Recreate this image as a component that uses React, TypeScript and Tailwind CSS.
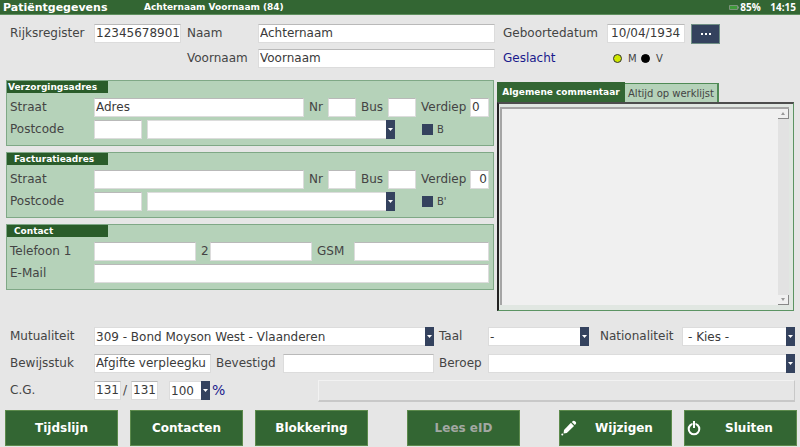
import { useState } from 'react';
import type { InputHTMLAttributes, ReactNode, SelectHTMLAttributes } from 'react';

type TabType = 'comment' | 'worklist';

function Field({ className = '', ...props }: InputHTMLAttributes<HTMLInputElement>) {
  return (
    <input
      type="text"
      className={`h-[19px] min-w-0 border border-[#dcdcdc] border-t-[#b9b9b9] bg-white px-px text-[12px] text-[#3a3a3a] outline-none ${className}`}
      {...props}
    />
  );
}

interface DropdownProps extends SelectHTMLAttributes<HTMLSelectElement> {
  options: string[];
  wrapper: string;
}

function Dropdown({ options, wrapper, className = 'px-px', ...props }: DropdownProps) {
  return (
    <div className={`relative h-[19px] min-w-0 ${wrapper}`}>
      <select
        className={`block h-full w-full appearance-none border border-[#dcdcdc] bg-white text-[12px] text-[#3a3a3a] outline-none ${className}`}
        {...props}
      >
        {options.map((option) => (
          <option key={option}>{option}</option>
        ))}
      </select>
      <span className="pointer-events-none absolute inset-y-0 right-0 flex w-[9px] items-center justify-center bg-[#34425e]">
        <svg width="5" height="3" viewBox="0 0 5 3">
          <path d="M0 0h5L2.5 3z" fill="#fff" />
        </svg>
      </span>
    </div>
  );
}

function Label({ id, className = '', children }: { id: string; className?: string; children: ReactNode }) {
  return (
    <label htmlFor={id} className={`shrink-0 whitespace-nowrap ${className}`}>
      {children}
    </label>
  );
}

function Panel({ title, indent, children }: { title: string; indent: string; children: ReactNode }) {
  return (
    <section className="border border-[#7fa886] bg-[#b5d2b9] pb-[6px]">
      <h2 className={`h-3 w-[101px] bg-[#2a5c2a] text-[9px] leading-3 font-bold whitespace-nowrap text-white ${indent}`}>
        {title}
      </h2>
      <div className="mt-[5px] flex flex-col gap-[3px] pr-1 pl-[3px]">{children}</div>
    </section>
  );
}

function Address({ prefix, street, floor, floorClass, box }: {
  prefix: string;
  street: string;
  floor: string;
  floorClass: string;
  box: string;
}) {
  return (
    <>
      <div className="flex items-center">
        <Label id={`${prefix}-street`} className="w-[84px]">Straat</Label>
        <Field id={`${prefix}-street`} defaultValue={street} className="flex-1" />
        <Label id={`${prefix}-nr`} className="w-6 pl-[5px]">Nr</Label>
        <Field id={`${prefix}-nr`} className="w-7" />
        <Label id={`${prefix}-bus`} className="w-8 pl-[5px]">Bus</Label>
        <Field id={`${prefix}-bus`} className="w-7" />
        <Label id={`${prefix}-floor`} className="w-[54px] pl-[5px]">Verdiep</Label>
        <Field id={`${prefix}-floor`} defaultValue={floor} className={`w-[19px] ${floorClass}`} />
      </div>
      <div className="flex items-center">
        <Label id={`${prefix}-zip`} className="w-[84px]">Postcode</Label>
        <Field id={`${prefix}-zip`} className="mr-[5px] w-12" />
        <Dropdown wrapper="flex-1" options={['']} aria-label="Gemeente" />
        <label className="flex w-[94px] items-center gap-1 pl-[27px] text-[10px]">
          <input type="checkbox" className="size-[11px] appearance-none bg-[#34425e]" />
          {box}
        </label>
      </div>
    </>
  );
}

function ActionButton({ icon, disabled, children }: {
  icon?: ReactNode;
  disabled?: boolean;
  children: ReactNode;
}) {
  return (
    <button
      type="button"
      disabled={disabled}
      className="flex h-9 w-[113px] shrink-0 items-center border border-[#5c8a4c] bg-[#336633] text-[12px] font-bold text-white disabled:text-[#a3a8a3]"
    >
      {icon}
      <span className="flex-1 text-center">{children}</span>
    </button>
  );
}

const PencilIcon = (
  <svg width="16" height="16" viewBox="0 0 16 16" fill="#fff" className="ml-px shrink-0">
    <path d="M9.9 2.8 13 5.9 5.8 12.9 2.6 13.6 3 10z" />
    <path d="M10.8 2.1 12 1q1-.8 2 .2l.8.8q.8 1 0 1.9L13.8 5z" />
    <circle cx="1.3" cy="14.4" r="1" />
  </svg>
);

const PowerIcon = (
  <svg width="16" height="16" viewBox="0 0 16 16" fill="none" stroke="#fff" strokeWidth="2" className="ml-px shrink-0">
    <circle cx="8" cy="9" r="5.3" />
    <path d="M8 1v7.5" stroke="#336633" strokeWidth="3" />
    <path d="M8 1v7" />
  </svg>
);

export default function App() {
  const [activeTab, setActiveTab] = useState<TabType>('comment');

  return (
    <div className="min-h-screen bg-[#e6e6e6] font-['DejaVu_Sans',sans-serif] text-[12px] leading-[19px] text-[#444]">
      <header className="flex h-[15px] items-center border-b border-[#5f8f5f] bg-[#336633] pr-1 pl-[3px] font-bold whitespace-nowrap text-white">
        <h1 className="w-[141px] text-[11px]">Patiëntgegevens</h1>
        <span className="flex-1 text-[9px]">Achternaam Voornaam (84)</span>
        <svg width="10" height="5" viewBox="0 0 10 5" className="mr-px">
          <path d="M.5.5h8v4h-8z" fill="#3f9a3a" stroke="#7d947d" />
          <path d="M9 1.5h1v2H9z" fill="#7d947d" />
        </svg>
        <span className="w-[30px] font-['Open_Sans',sans-serif] text-[10px]">85%</span>
        <span className="font-['Open_Sans',sans-serif] text-[10px]">14:15</span>
      </header>

      <form onSubmit={(e) => e.preventDefault()}>
        {/* Identity */}
        <div className="flex gap-2 pt-[9px] pl-[10px]">
          <div className="flex min-w-0 flex-1">
            <Label id="register" className="w-[84px]">Rijksregister</Label>
            <Field id="register" defaultValue="12345678901" className="w-[87px]" />
            <div className="flex min-w-0 flex-1 flex-col gap-[6px] pl-[6px]">
              <div className="flex">
                <Label id="lastname" className="w-[71px]">Naam</Label>
                <Field id="lastname" defaultValue="Achternaam" className="flex-1" />
              </div>
              <div className="flex">
                <Label id="firstname" className="w-[71px]">Voornaam</Label>
                <Field id="firstname" defaultValue="Voornaam" className="flex-1" />
              </div>
            </div>
          </div>
          <div className="flex w-[297px] shrink-0 flex-col gap-[5px]">
            <div className="flex h-5">
              <Label id="birthdate" className="w-[104px]">Geboortedatum</Label>
              <Field id="birthdate" defaultValue="10/04/1934" className="mr-[6px] w-[78px] pl-[3px]" />
              <button
                type="button"
                aria-label="Kies datum"
                className="flex h-5 w-[29px] items-center justify-center border border-[#6f8f85] bg-[#34425e]"
              >
                <svg width="10" height="2" viewBox="0 0 10 2" fill="#fff">
                  <path d="M0 0h2v2H0zM4 0h2v2H4zM8 0h2v2H8z" />
                </svg>
              </button>
            </div>
            <fieldset className="flex items-center text-[10px]">
              <legend className="float-left w-[110px] text-[12px] text-[#1a1a8c]">Geslacht</legend>
              <label className="flex w-[28px] items-center gap-[6px]">
                <input
                  type="radio"
                  name="gender"
                  defaultChecked
                  className="size-[9px] shrink-0 appearance-none rounded-full border border-[#333] bg-black checked:bg-[#cfe800]"
                />
                M
              </label>
              <label className="flex items-center gap-[6px]">
                <input
                  type="radio"
                  name="gender"
                  className="size-[9px] shrink-0 appearance-none rounded-full border border-black bg-black checked:bg-[#cfe800]"
                />
                V
              </label>
            </fieldset>
          </div>
        </div>

        <div className="mt-3 flex gap-[3px] pr-[6px] pl-[6px]">
          {/* Addresses and contact */}
          <div className="flex min-w-0 flex-1 flex-col gap-[6px]">
            <Panel title="Verzorgingsadres" indent="pl-px">
              <Address prefix="care" street="Adres" floor="0" floorClass="" box="B" />
            </Panel>
            <Panel title="Facturatieadres" indent="pl-[7px]">
              <Address prefix="bill" street="" floor="0" floorClass="text-right" box="B'" />
            </Panel>
            <Panel title="Contact" indent="pl-[7px]">
              <div className="flex items-center">
                <Label id="phone1" className="w-[84px]">Telefoon 1</Label>
                <Field id="phone1" className="w-[102px]" />
                <Label id="phone2" className="w-[14px] pl-[5px]">2</Label>
                <Field id="phone2" className="w-[102px]" />
                <Label id="gsm" className="w-[42px] pl-[5px]">GSM</Label>
                <Field id="gsm" className="flex-1" />
              </div>
              <div className="flex items-center">
                <Label id="email" className="w-[84px]">E-Mail</Label>
                <Field id="email" className="flex-1" />
              </div>
            </Panel>
          </div>

          {/* Comment tabs */}
          <div className="flex w-[297px] shrink-0 flex-col pt-[2px]">
            <div className="flex items-end" role="tablist">
              <button
                type="button"
                role="tab"
                aria-selected={activeTab === 'comment'}
                onClick={() => setActiveTab('comment')}
                className="h-5 w-32 border border-[#336633] bg-[#336633] text-[9px] font-bold whitespace-nowrap text-white"
              >
                Algemene commentaar
              </button>
              <button
                type="button"
                role="tab"
                aria-selected={activeTab === 'worklist'}
                onClick={() => setActiveTab('worklist')}
                className="h-[19px] w-[94px] border-t border-r-2 border-[#4f8a55] bg-[#b5d2b9] text-[10px] whitespace-nowrap text-[#444]"
              >
                Altijd op werklijst
              </button>
            </div>
            <div className="flex h-[209px] border-t-2 border-r border-b border-l-2 border-t-[#4d4d4d] border-r-[#5c9463] border-b-[#5c9463] border-l-[#222] bg-[#e1e7e2] pt-[3px] pr-1 pb-[5px] pl-px">
              <textarea
                aria-label="Commentaar"
                className="min-w-0 flex-1 resize-none border-t-2 border-l-2 border-[#a5a5a5] bg-[#f0f0f0] p-1 outline-none"
              />
              <div className="flex w-[11px] flex-col justify-between border-t-2 border-t-[#a5a5a5] bg-[#e2e2e2]">
                <button type="button" aria-label="Omhoog" className="flex h-[10px] items-center justify-center border-r border-b border-[#888] bg-[#f0f0f0]">
                  <svg width="4" height="3" viewBox="0 0 4 3"><path d="M0 3h4L2 0z" fill="#999" /></svg>
                </button>
                <button type="button" aria-label="Omlaag" className="flex h-[10px] items-center justify-center border-r border-b border-[#888] bg-[#f0f0f0]">
                  <svg width="4" height="3" viewBox="0 0 4 3"><path d="M0 0h4L2 3z" fill="#999" /></svg>
                </button>
              </div>
            </div>
          </div>
        </div>

        {/* Insurance */}
        <div className="mt-4 flex flex-col gap-2 pr-[5px] pl-[10px]">
          <div className="flex">
            <Label id="insurer" className="w-[84px]">Mutualiteit</Label>
            <Dropdown id="insurer" wrapper="flex-1" options={['309 - Bond Moyson West - Vlaanderen']} />
            <Label id="language" className="w-[54px] pl-[5px]">Taal</Label>
            <Dropdown id="language" wrapper="w-[101px]" options={['-']} />
            <Label id="nationality" className="w-[93px] pl-[11px]">Nationaliteit</Label>
            <Dropdown id="nationality" wrapper="w-[113px]" className="px-[5px]" options={['- Kies -']} />
          </div>
          <div className="flex">
            <Label id="proof" className="w-[84px]">Bewijsstuk</Label>
            <Field id="proof" defaultValue="Afgifte verpleegku" className="w-[117px]" />
            <Label id="confirmed" className="w-[72px] pl-[5px]">Bevestigd</Label>
            <Field id="confirmed" className="flex-1" />
            <Label id="job" className="w-[54px] pl-[5px]">Beroep</Label>
            <Dropdown id="job" wrapper="w-[307px]" options={['']} />
          </div>
          <div className="flex h-5">
            <Label id="cg1" className="w-[84px]">C.G.</Label>
            <Field id="cg1" defaultValue="131" className="w-[27px] text-right" />
            <Label id="cg2" className="w-[10px] pl-[2px]">/</Label>
            <Field id="cg2" defaultValue="131" className="mr-[11px] w-[27px] text-right" />
            <Dropdown id="percent" wrapper="w-[41px]" options={['100']} />
            <Label id="percent" className="w-[108px] pl-[2px] text-[14px] text-[#1a1a8c]">%</Label>
            <div className="-my-px h-[22px] flex-1 border border-[#f2f2f2] border-r-[#c8c8c8] border-b-2 border-b-[#c8c8c8]" />
          </div>
        </div>

        {/* Actions */}
        <div className="mt-[9px] flex justify-between pr-[3px] pl-[5px]">
          <div className="flex gap-3">
            <ActionButton>Tijdslijn</ActionButton>
            <ActionButton>Contacten</ActionButton>
            <ActionButton>Blokkering</ActionButton>
          </div>
          <ActionButton disabled>Lees eID</ActionButton>
          <div className="flex gap-3">
            <ActionButton icon={PencilIcon}>Wijzigen</ActionButton>
            <ActionButton icon={PowerIcon}>Sluiten</ActionButton>
          </div>
        </div>
      </form>
    </div>
  );
}
